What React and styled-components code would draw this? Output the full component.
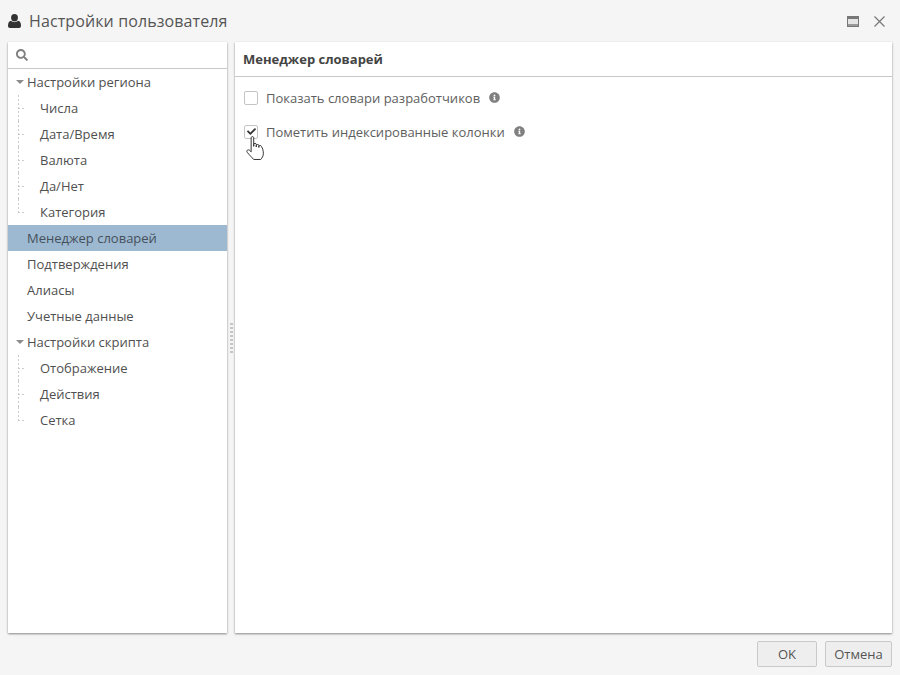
import React from "react";
import styled, { createGlobalStyle } from "styled-components";
import { FaSearch, FaInfoCircle, FaCheck } from "react-icons/fa";

const Global = createGlobalStyle`
  html, body { margin: 0; padding: 0; }
  body { font-family: "Open Sans", "Liberation Sans", sans-serif; color: #4a4a4a; }
`;

const Dialog = styled.div`
  width: 900px;
  height: 675px;
  background: #f5f5f5;
  display: flex;
  flex-direction: column;
  overflow: hidden;
`;

const TitleBar = styled.div`
  height: 42px;
  flex: none;
  display: flex;
  align-items: center;
  padding: 0 15px 0 8px;
  box-sizing: border-box;
`;

const UserIcon = styled.svg`
  margin-right: 8px;
  flex: none;
`;

const Title = styled.div`
  font-size: 16px;
  letter-spacing: 0.11px;
  color: #555;
  flex: 1;
`;

const WindowButtons = styled.div`
  display: flex;
  align-items: center;
  gap: 15px;
`;

const Body = styled.div`
  flex: 1;
  display: flex;
  padding: 0 8px;
  min-height: 0;
`;

const Panel = styled.div`
  background: #fff;
  box-shadow: 0 1px 2px rgba(0, 0, 0, 0.45);
  display: flex;
  flex-direction: column;
`;

const LeftPanel = styled(Panel)`
  width: 219px;
  flex: none;
`;

const RightPanel = styled(Panel)`
  flex: 1;
`;

const SearchRow = styled.div`
  height: 26px;
  flex: none;
  border-bottom: 1px solid #c8c8c8;
  padding-left: 8px;
  display: flex;
  align-items: center;
  color: #808080;
`;

const Tree = styled.div`
  display: flex;
  flex-direction: column;
`;

const Row = styled.div`
  height: 26px;
  display: flex;
  align-items: center;
  padding-left: ${(p) => (p.$child ? 32 : 19)}px;
  font-size: 13px;
  position: relative;
  background: ${(p) => (p.$selected ? "#9db9d2" : "transparent")};
  color: ${(p) => (p.$selected ? "#46505a" : "#505050")};
`;

const Caret = styled.span`
  position: absolute;
  left: 8px;
  top: 11px;
  border-left: 4px solid transparent;
  border-right: 4px solid transparent;
  border-top: 4px solid #8c8c8c;
`;

const Guide = styled.span`
  position: absolute;
  left: 10px;
  top: 0;
  height: ${(p) => (p.$last ? 14 : 26)}px;
  width: 1px;
  background: repeating-linear-gradient(to bottom, #cccccc 0 2px, transparent 2px 4px);
  &::after {
    content: "";
    position: absolute;
    left: 0;
    top: 13px;
    width: 7px;
    height: 1px;
    background: repeating-linear-gradient(to right, #cccccc 0 2px, transparent 2px 4px);
  }
`;

const Splitter = styled.div`
  width: 8px;
  flex: none;
  display: flex;
  align-items: center;
  justify-content: center;
`;

const Grip = styled.div`
  width: 3px;
  height: 30px;
  background: repeating-linear-gradient(to bottom, #c6c6c6 0 2px, transparent 2px 4px);
`;

const PanelHeader = styled.div`
  height: 35px;
  flex: none;
  box-sizing: border-box;
  border-bottom: 1px solid #c8c8c8;
  display: flex;
  align-items: center;
  padding-left: 8px;
  font-size: 13px;
  font-weight: 700;
  color: #444;
`;

const Options = styled.div`
  display: flex;
  flex-direction: column;
  gap: 13px;
  padding: 10px 0 0 9px;
`;

const Option = styled.div`
  height: 21px;
  display: flex;
  align-items: center;
  font-size: 13px;
  color: #5e5e5e;
  position: relative;
`;

const Check = styled.span`
  width: 14px;
  height: 14px;
  box-sizing: border-box;
  border: 1px solid #c4c4c4;
  border-radius: 2px;
  background: #fff;
  margin-right: 8px;
  display: flex;
  align-items: center;
  justify-content: center;
  color: #333;
`;

const Info = styled(FaInfoCircle)`
  width: 11px;
  height: 11px;
  color: #7f7f7f;
  margin-left: 9px;
`;

const Hand = styled.svg`
  position: absolute;
  left: 2px;
  top: 15px;
`;

const Footer = styled.div`
  height: 42px;
  flex: none;
  display: flex;
  justify-content: flex-end;
  align-items: flex-start;
  gap: 8px;
  padding: 8px 8px 0 0;
  box-sizing: border-box;
`;

const Button = styled.div`
  width: ${(p) => p.$width}px;
  height: 26px;
  box-sizing: border-box;
  border: 1px solid #c9c9c9;
  border-radius: 2px;
  background: #eeeeee;
  display: flex;
  align-items: center;
  justify-content: center;
  font-size: 13px;
  color: #555;
`;

const nodes = [
  { label: "Настройки региона", group: true },
  { label: "Числа", child: true },
  { label: "Дата/Время", child: true },
  { label: "Валюта", child: true },
  { label: "Да/Нет", child: true },
  { label: "Категория", child: true, last: true },
  { label: "Менеджер словарей", selected: true },
  { label: "Подтверждения" },
  { label: "Алиасы" },
  { label: "Учетные данные" },
  { label: "Настройки скрипта", group: true },
  { label: "Отображение", child: true },
  { label: "Действия", child: true },
  { label: "Сетка", child: true, last: true },
];

export default function App() {
  return (
    <Dialog>
      <Global />
      <TitleBar>
        <UserIcon width="13" height="14" viewBox="0 0 13 14">
          <ellipse cx="6.5" cy="3.8" rx="3.4" ry="3.7" fill="#333" />
          <path
            d="M3 6.8 C4.5 8.6 8.5 8.6 10 6.8 C12 7.2 13 9 13 11.8 C13 13.2 12.2 14 11 14 H2 C0.8 14 0 13.2 0 11.8 C0 9 1 7.2 3 6.8 Z"
            fill="#333"
          />
        </UserIcon>
        <Title>Настройки пользователя</Title>
        <WindowButtons>
          <svg width="12" height="11" viewBox="0 0 12 11">
            <rect x="0" y="0" width="12" height="11" fill="#777" />
            <rect x="1" y="3" width="10" height="5" fill="#e4e4e4" />
            <rect x="1" y="8" width="10" height="2" fill="#999" />
          </svg>
          <svg width="11" height="11" viewBox="0 0 11 11">
            <path d="M0.5 0.5 L10.5 10.5 M10.5 0.5 L0.5 10.5" stroke="#777" strokeWidth="1.2" fill="none" />
          </svg>
        </WindowButtons>
      </TitleBar>
      <Body>
        <LeftPanel>
          <SearchRow>
            <FaSearch size={12} />
          </SearchRow>
          <Tree>
            {nodes.map((n) => (
              <Row key={n.label} $child={n.child} $selected={n.selected}>
                {n.group && <Caret />}
                {n.child && <Guide $last={n.last} />}
                {n.label}
              </Row>
            ))}
          </Tree>
        </LeftPanel>
        <Splitter>
          <Grip />
        </Splitter>
        <RightPanel>
          <PanelHeader>Менеджер словарей</PanelHeader>
          <Options>
            <Option>
              <Check />
              Показать словари разработчиков
              <Info />
            </Option>
            <Option>
              <Check>
                <FaCheck size={9} />
              </Check>
              Пометить индексированные колонки
              <Info />
              <Hand width="18" height="24" viewBox="0.5 0.5 14 22" preserveAspectRatio="none">
                <path
                  d="M4.5 2 C4.5 0.8 6.5 0.8 6.5 2 V10 V8 C6.5 7 8.5 7 8.5 8 V10.5 V9 C8.5 8 10.5 8 10.5 9 V11 V10 C10.5 9 12.5 9 12.5 10 C13.5 12 14 14 14 16.5 C14 19 13 20.5 12 22 H6.5 C5 20 3.5 18.5 1.5 15.5 C0.5 14 2 12.5 3.2 13.5 L4.5 15 Z"
                  fill="#fff"
                  stroke="#333"
                  strokeWidth="1"
                  strokeLinejoin="round"
                  vectorEffect="non-scaling-stroke"
                />
              </Hand>
            </Option>
          </Options>
        </RightPanel>
      </Body>
      <Footer>
        <Button $width={60}>OK</Button>
        <Button $width={67}>Отмена</Button>
      </Footer>
    </Dialog>
  );
}
